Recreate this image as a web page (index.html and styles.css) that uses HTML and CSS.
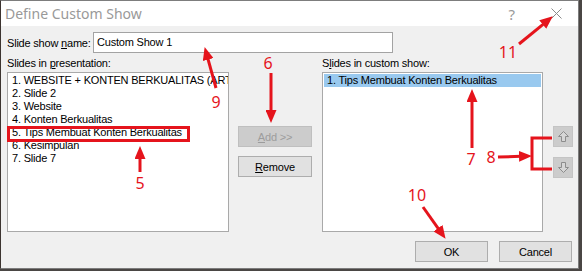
FILE: index.html
```html
<!DOCTYPE html>
<html>
<head>
<meta charset="utf-8">
<link rel="stylesheet" href="styles.css">
</head>
<body>
<div class="dialog">
  <div class="titlebar">
    <span class="title">Define Custom Show</span>
    <span class="help">?</span>
    <svg class="close" width="11" height="11" viewBox="0 0 11 11"><path d="M0.5 0.5 L10.5 10.5 M10.5 0.5 L0.5 10.5" stroke="#8a8a8a" stroke-width="1" fill="none"/></svg>
  </div>
  <div class="content">
    <div class="name-row">
      <span class="name-label">Slide show <u>n</u>ame:</span>
      <div class="textbox">Custom Show 1</div>
    </div>
    <div class="main">
      <div class="col">
        <div class="lbl">Slides in <u>p</u>resentation:</div>
        <div class="list">
          <div class="item">1. WEBSITE + KONTEN BERKUALITAS (ARTIKEL)</div>
          <div class="item">2. Slide 2</div>
          <div class="item">3. Website</div>
          <div class="item">4. Konten Berkualitas</div>
          <div class="item">5. Tips Membuat Konten Berkualitas</div>
          <div class="item">6. Kesimpulan</div>
          <div class="item">7. Slide 7</div>
        </div>
      </div>
      <div class="mid">
        <div class="btn disabled"><u>A</u>dd &gt;&gt;</div>
        <div class="btn"><u>R</u>emove</div>
      </div>
      <div class="col">
        <div class="lbl">S<u>l</u>ides in custom show:</div>
        <div class="list">
          <div class="item sel">1. Tips Membuat Konten Berkualitas</div>
        </div>
      </div>
      <div class="updown">
        <div class="arrowbtn">
          <svg width="11" height="11" viewBox="0 0 11 11"><path d="M5.5 0.5 L10.5 5.5 L7.5 5.5 L7.5 10.5 L3.5 10.5 L3.5 5.5 L0.5 5.5 Z" fill="#d6d6d6" stroke="#8c8c8c" stroke-width="1"/></svg>
        </div>
        <div class="arrowbtn">
          <svg width="11" height="11" viewBox="0 0 11 11"><path d="M5.5 10.5 L10.5 5.5 L7.5 5.5 L7.5 0.5 L3.5 0.5 L3.5 5.5 L0.5 5.5 Z" fill="#d6d6d6" stroke="#8c8c8c" stroke-width="1"/></svg>
        </div>
      </div>
    </div>
    <div class="footer">
      <div class="btn wide">OK</div>
      <div class="btn wide">Cancel</div>
    </div>
  </div>
</div>

<svg class="annot" width="582" height="271" viewBox="0 0 582 271">
  <defs>
    <marker id="ah" markerUnits="userSpaceOnUse" markerWidth="13" markerHeight="11" refX="2" refY="5.5" orient="auto">
      <path d="M0 0 L13 5.5 L0 11 Z" fill="#e5141c"/>
    </marker>
  </defs>
  <g stroke="#e5141c" stroke-width="3" fill="none">
    <rect x="8.5" y="127.5" width="180" height="13"/>
    <line x1="216" y1="88" x2="207.6" y2="57.6" marker-end="url(#ah)"/>
    <line x1="271" y1="73" x2="271" y2="112" marker-end="url(#ah)"/>
    <line x1="140" y1="172" x2="140" y2="157" marker-end="url(#ah)"/>
    <line x1="472" y1="148" x2="472" y2="100" marker-end="url(#ah)"/>
    <line x1="498" y1="157" x2="521" y2="156.3" marker-end="url(#ah)"/>
    <polyline points="552,138 532,138 532,169 552,169"/>
    <line x1="423" y1="207" x2="439.2" y2="229.8" marker-end="url(#ah)"/>
    <line x1="519" y1="44" x2="544.3" y2="23.3" marker-end="url(#ah)"/>
  </g>
  <g class="nums" fill="#e5141c">
    <text x="216" y="108">9</text>
    <text x="268" y="69">6</text>
    <text x="140" y="189">5</text>
    <text x="471" y="165">7</text>
    <text x="491" y="163">8</text>
    <text x="417" y="201">10</text>
    <text x="508" y="58">11</text>
  </g>
</svg>
</body>
</html>
```
FILE: styles.css
```css
html, body {
  margin: 0;
  padding: 0;
}
body {
  width: 582px;
  height: 271px;
  background: #4a4644;
  position: relative;
  overflow: hidden;
  font-family: "Liberation Sans", Arial, sans-serif;
  font-size: 11px;
  letter-spacing: -0.2px;
  color: #000;
}
.dialog {
  width: 579px;
  height: 269px;
  box-sizing: border-box;
  border: 1px solid #7d7d7d;
  border-left-color: #3c3430;
  background: #f0f0f0;
  display: flex;
  flex-direction: column;
}
.titlebar {
  height: 25px;
  background: #fff;
  display: flex;
  align-items: center;
  padding-left: 4px;
  letter-spacing: 0;
}
.title {
  font-family: "Noto Sans", sans-serif;
  font-size: 14px;
  color: #999;
  flex: 1;
}
.help {
  font-family: "Noto Sans", sans-serif;
  font-size: 15px;
  color: #9a9a9a;
  margin-right: 36px;
}
.close {
  margin-right: 16px;
}
.content {
  padding: 6px 6px 0 6px;
  display: flex;
  flex-direction: column;
}
.name-row {
  display: flex;
  align-items: center;
  height: 21px;
}
.name-label {
  width: 86px;
  white-space: nowrap;
}
.textbox {
  width: 300px;
  height: 21px;
  box-sizing: border-box;
  border: 1px solid #a3a3a3;
  background: #fff;
  padding-left: 3px;
  line-height: 19px;
  white-space: nowrap;
}
.main {
  display: grid;
  grid-template-columns: 222px 73px 221px 20px;
  column-gap: 10px;
}
.lbl {
  height: 19px;
  box-sizing: border-box;
  padding-top: 2px;
  line-height: 16px;
  white-space: nowrap;
}
.list {
  height: 160px;
  box-sizing: border-box;
  border: 1px solid #a9a9a9;
  background: #fff;
  padding: 1px;
  overflow: hidden;
}
.item {
  height: 13px;
  line-height: 13px;
  padding-left: 3px;
  white-space: nowrap;
}
.item.sel {
  background: #99c9ef;
}
.mid {
  padding-top: 73px;
  display: flex;
  flex-direction: column;
  gap: 9px;
  margin-left: -1px;
}
.btn {
  height: 21px;
  box-sizing: border-box;
  border: 1px solid #adadad;
  background: #e1e1e1;
  display: flex;
  align-items: center;
  justify-content: center;
  white-space: nowrap;
}
.btn.disabled {
  background: #cccccc;
  border-color: #bfbfbf;
  color: #9c9c9c;
}
.updown {
  padding-top: 73px;
  display: flex;
  flex-direction: column;
  gap: 10px;
}
.arrowbtn {
  height: 21px;
  box-sizing: border-box;
  border: 1px solid #c4c4c4;
  background: #cccccc;
  display: flex;
  align-items: center;
  justify-content: center;
}
.footer {
  margin-top: 9px;
  display: flex;
  justify-content: flex-end;
  gap: 11px;
}
.btn.wide {
  width: 73px;
}
.annot {
  position: absolute;
  left: 0;
  top: 0;
}
.nums text {
  font-family: "Noto Sans", sans-serif;
  font-size: 16px;
  letter-spacing: 0;
  text-anchor: middle;
}
```
